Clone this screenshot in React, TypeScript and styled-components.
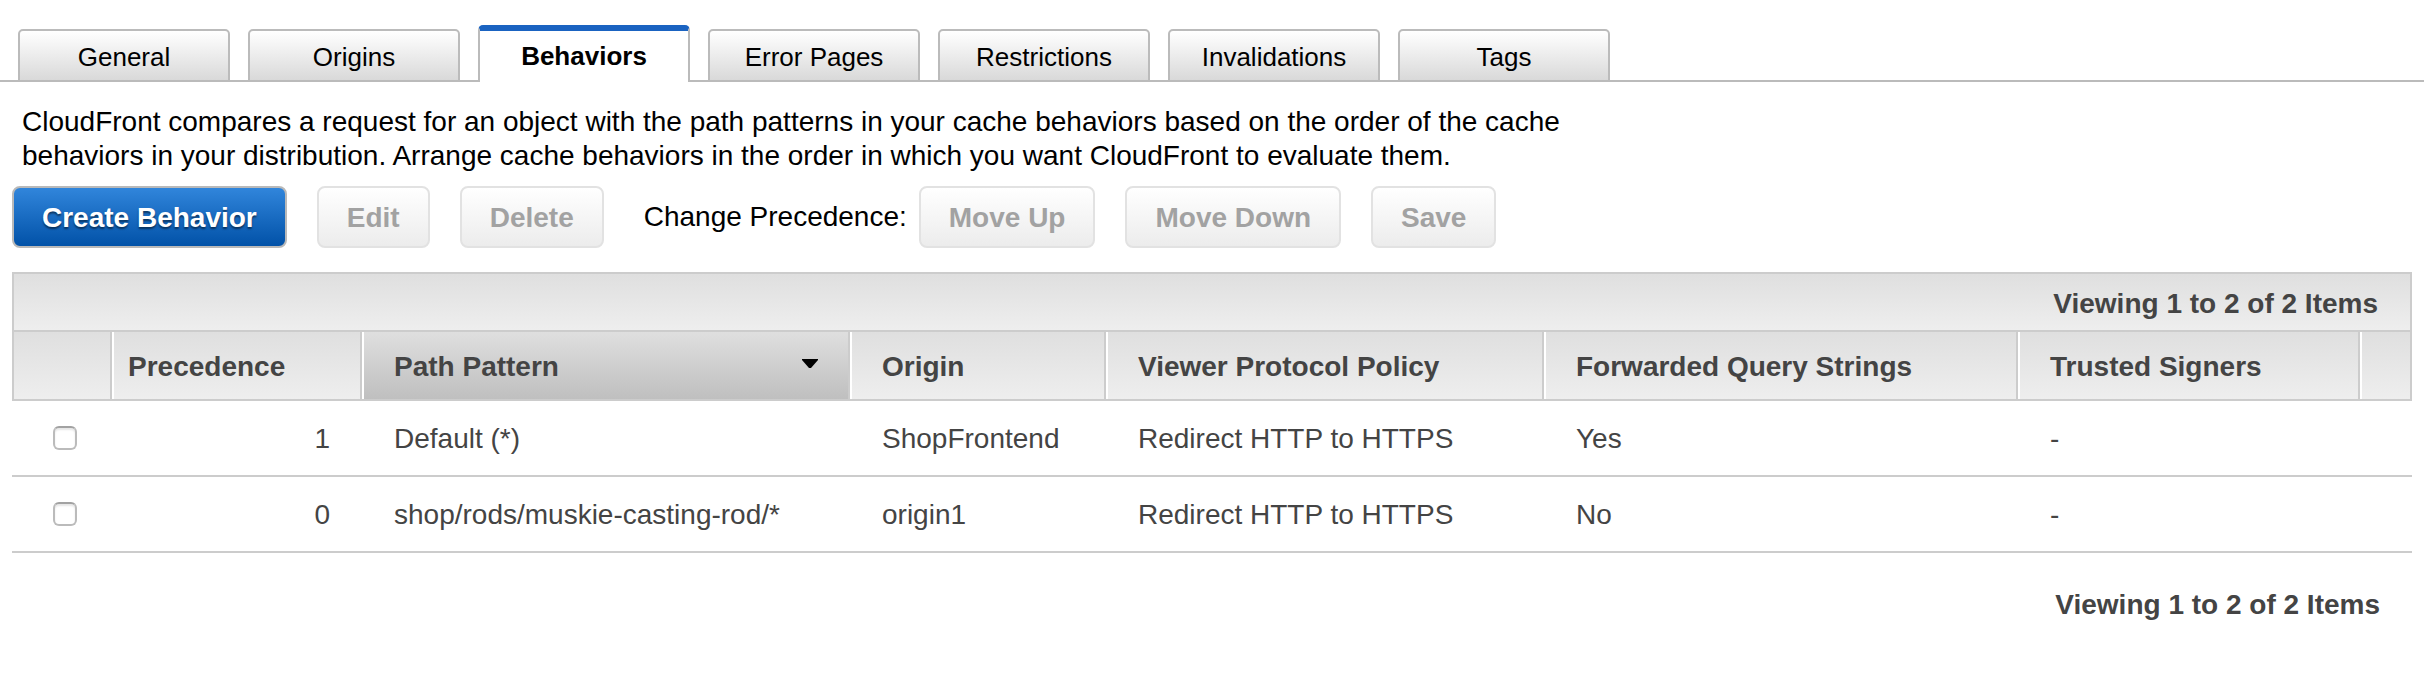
import React from "react";
import styled, { createGlobalStyle, css } from "styled-components";

const GlobalStyle = createGlobalStyle`
  * { box-sizing: border-box; }
  body {
    margin: 0;
    background: #fff;
    color: #000;
    font-family: "Liberation Sans", Arial, Helvetica, sans-serif;
    font-size: 28px;
    line-height: 34px;
  }
  button { font-family: inherit; }
`;

const Page = styled.main`
  padding: 25px 10px 48px 0;
`;

const TabBar = styled.nav`
  display: flex;
  align-items: flex-end;
  gap: 18px;
  padding-left: 18px;
  box-shadow: inset 0 -2px 0 #bbb;
`;

const Tab = styled.button<{ $active?: boolean }>`
  width: 212px;
  height: 53px;
  padding: 2px 0 0;
  border: 2px solid #bbb;
  border-radius: 5px 5px 0 0;
  background: linear-gradient(#fff, #d9d9d9);
  color: #000;
  font-size: 26px;
  line-height: 32px;
  cursor: pointer;

  ${({ $active }) =>
    $active &&
    css`
      height: 57px;
      padding: 0 0 2px;
      border-top: 6px solid #1a63c1;
      border-bottom: 0;
      background: #fff;
      font-weight: bold;
    `}
`;

const Panel = styled.section`
  padding: 23px 12px 0 12px;
`;

const Description = styled.p`
  max-width: 1600px;
  margin: 0;
  padding-left: 10px;
`;

const Toolbar = styled.div`
  display: flex;
  align-items: center;
  gap: 30px;
  margin: 13px 0 24px;
`;

const Precedence = styled.div`
  display: flex;
  align-items: center;
  gap: 12px;
  padding-left: 10px;
`;

const Button = styled.button<{ $primary?: boolean }>`
  height: 62px;
  padding: 2px 28px 0;
  border: 2px solid #e2e2e2;
  border-radius: 8px;
  background: linear-gradient(#fff, #ececec);
  color: #a2a2a2;
  font-size: 28px;
  font-weight: bold;
  line-height: 34px;
  white-space: nowrap;

  ${({ $primary }) =>
    $primary &&
    css`
      border-color: #b9b9b9;
      background: linear-gradient(#3287dd, #0050a6);
      background-origin: border-box;
      color: #fff;
      text-shadow: 0 2px 2px rgba(0, 0, 0, 0.5);
      cursor: pointer;
    `}
`;

const Summary = styled.div<{ $bar?: boolean }>`
  padding: 35px 32px 0;
  color: #444;
  font-weight: bold;
  text-align: right;

  ${({ $bar }) =>
    $bar &&
    css`
      height: 58px;
      padding: 13px 32px 0;
      border: 2px solid #ccc;
      border-bottom: 0;
      background: linear-gradient(#dfdfdf, #eee);
    `}
`;

const Table = styled.table`
  width: 100%;
  table-layout: fixed;
  border-collapse: separate;
  border-spacing: 0;
  color: #444;
`;

const HeadCell = styled.th<{ $sorted?: boolean; $tight?: boolean }>`
  height: 71px;
  padding: 2px 30px 0 ${({ $tight }) => ($tight ? 16 : 32)}px;
  border: solid #ccc;
  border-width: 2px 2px 2px 0;
  background: ${({ $sorted }) =>
    $sorted ? "linear-gradient(#dfdfdf, #bfbfbf)" : "linear-gradient(#dfdfdf, #eee)"};
  text-align: left;
  white-space: nowrap;

  &:first-child { border-left-width: 2px; }
  &:not(:first-child) { box-shadow: inset 2px 0 0 #fff; }
`;

const HeadContent = styled.span`
  display: flex;
  align-items: center;
  justify-content: space-between;
`;

const SortIcon = styled.svg`
  margin-bottom: 6px;
`;

const Cell = styled.td<{ $numeric?: boolean }>`
  height: 76px;
  padding: 2px 32px 0;
  border-bottom: 2px solid #ccc;
  text-align: ${({ $numeric }) => ($numeric ? "right" : "left")};
  white-space: nowrap;
`;

const CheckCell = styled.td`
  padding: 0 0 0 41px;
  border-bottom: 2px solid #ccc;
`;

const Checkbox = styled.input`
  display: block;
  appearance: none;
  width: 24px;
  height: 24px;
  margin: 0;
  border: 2px solid #bbb;
  border-top-color: #a2a2a2;
  border-radius: 6px;
  background: #fff;
  box-shadow: inset 0 2px 2px #e6e6e6;

  &:checked { background: #1a63c1; }
`;

const tabs = ["General", "Origins", "Behaviors", "Error Pages", "Restrictions", "Invalidations", "Tags"];

const columns = [
  { label: "", weight: 100 },
  { label: "Precedence", weight: 250 },
  { label: "Path Pattern", weight: 488 },
  { label: "Origin", weight: 256 },
  { label: "Viewer Protocol Policy", weight: 438 },
  { label: "Forwarded Query Strings", weight: 474 },
  { label: "Trusted Signers", weight: 342 },
  { label: "", weight: 52 },
];
const totalWeight = columns.reduce((sum, c) => sum + c.weight, 0);

const behaviors = [
  { precedence: 1, path: "Default (*)", origin: "ShopFrontend", policy: "Redirect HTTP to HTTPS", query: "Yes", signers: "-" },
  { precedence: 0, path: "shop/rods/muskie-casting-rod/*", origin: "origin1", policy: "Redirect HTTP to HTTPS", query: "No", signers: "-" },
];

const summary = `Viewing 1 to ${behaviors.length} of ${behaviors.length} Items`;

const SortArrow = () => (
  <SortIcon width="16" height="10" viewBox="0 0 16 10" aria-hidden="true">
    <path d="M0 0H16V1L9 9H7L0 1Z" fill="#000" />
  </SortIcon>
);

export default function App() {
  return (
    <>
      <GlobalStyle />
      <Page>
        <TabBar>
          {tabs.map((tab) => (
            <Tab key={tab} type="button" $active={tab === "Behaviors"}>
              {tab}
            </Tab>
          ))}
        </TabBar>
        <Panel>
          <Description>
            CloudFront compares a request for an object with the path patterns in your cache behaviors based on the order
            of the cache behaviors in your distribution. Arrange cache behaviors in the order in which you want CloudFront
            to evaluate them.
          </Description>
          <Toolbar>
            <Button type="button" $primary>Create Behavior</Button>
            <Button type="button" disabled>Edit</Button>
            <Button type="button" disabled>Delete</Button>
            <Precedence>
              <span>Change Precedence:</span>
              <Button type="button" disabled>Move Up</Button>
            </Precedence>
            <Button type="button" disabled>Move Down</Button>
            <Button type="button" disabled>Save</Button>
          </Toolbar>
          <Summary $bar>{summary}</Summary>
          <Table>
            <colgroup>
              {columns.map((c, i) => (
                <col key={i} style={{ width: `${(c.weight / totalWeight) * 100}%` }} />
              ))}
            </colgroup>
            <thead>
              <tr>
                {columns.map((c, i) => (
                  <HeadCell
                    key={i}
                    scope="col"
                    $sorted={c.label === "Path Pattern"}
                    $tight={c.label === "Precedence"}
                  >
                    <HeadContent>
                      {c.label}
                      {c.label === "Path Pattern" && <SortArrow />}
                    </HeadContent>
                  </HeadCell>
                ))}
              </tr>
            </thead>
            <tbody>
              {behaviors.map((b) => (
                <tr key={b.precedence}>
                  <CheckCell>
                    <Checkbox type="checkbox" aria-label={`Select ${b.path}`} />
                  </CheckCell>
                  <Cell $numeric>{b.precedence}</Cell>
                  <Cell>{b.path}</Cell>
                  <Cell>{b.origin}</Cell>
                  <Cell>{b.policy}</Cell>
                  <Cell>{b.query}</Cell>
                  <Cell>{b.signers}</Cell>
                  <Cell />
                </tr>
              ))}
            </tbody>
          </Table>
          <Summary>{summary}</Summary>
        </Panel>
      </Page>
    </>
  );
}
